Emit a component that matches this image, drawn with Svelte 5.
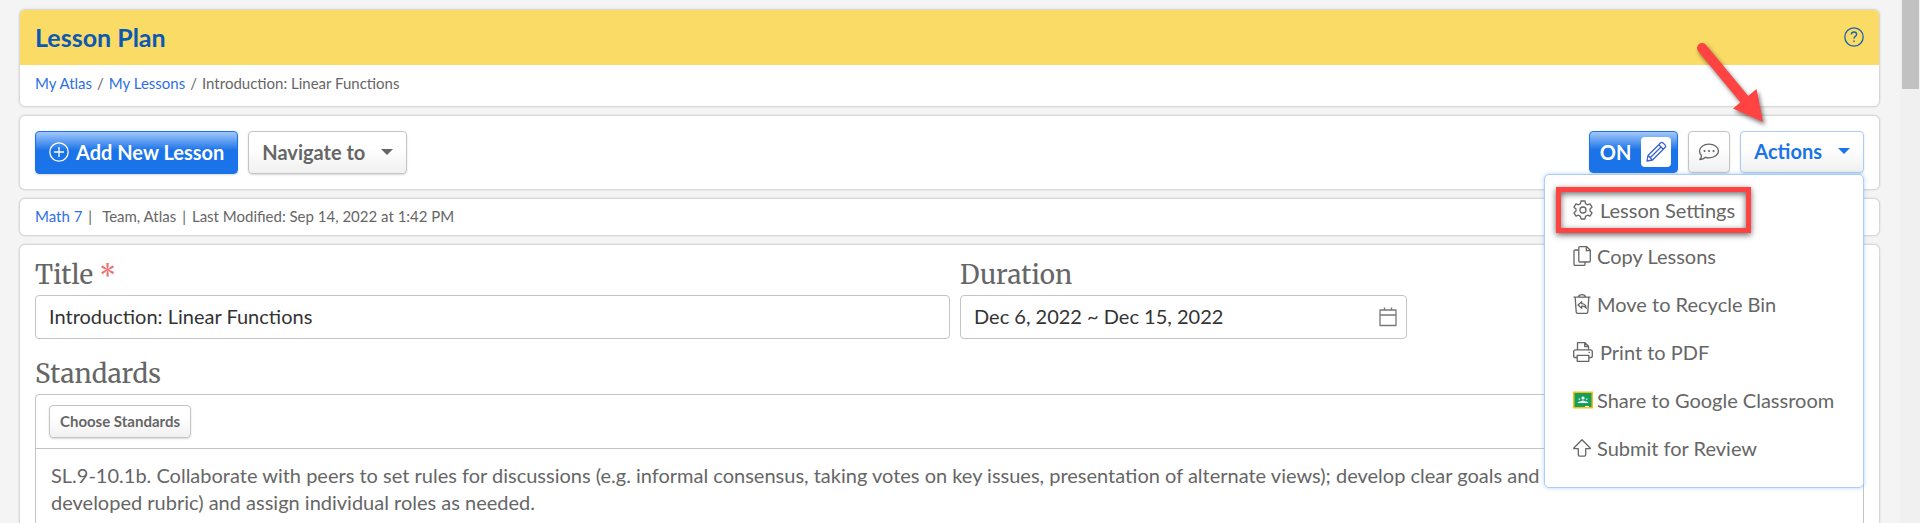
<script>
  let title = $state('Introduction: Linear Functions');
  let duration = $state('Dec 6, 2022 ~ Dec 15, 2022');
  let editing = $state(true);
  let menuOpen = $state(true);

  const menuItems = [
    { icon: 'gear', label: 'Lesson Settings', highlight: true },
    { icon: 'copy', label: 'Copy Lessons' },
    { icon: 'bin', label: 'Move to Recycle Bin' },
    { icon: 'print', label: 'Print to PDF' },
    { icon: 'classroom', label: 'Share to Google Classroom' },
    { icon: 'up', label: 'Submit for Review' },
  ];
</script>

{#snippet icon(name)}
  {#if name === 'gear'}
    <svg class="wide" width="20" height="20" viewBox="0 0 20 20">
      <path d="M8 1h4l.5 2.6 2 1.2 2.5-1 2 3.4-2 1.7v2.2l2 1.7-2 3.4-2.500-1-2 1.200L12 19H8l-.5-2.600-2-1.200-2.500 1-2-3.400 2-1.700V8.900L1 7.200l2-3.400 2.500 1 2-1.200z" />
      <circle cx="10" cy="10" r="3" />
    </svg>
  {:else if name === 'copy'}
    <svg width="18" height="20" viewBox="0 0 18 20">
      <path d="M5.700 4H2.200Q1 4 1 5.200v13.100q0 1.200 1.200 1.200h8.600q1.200 0 1.200-1.200V16" />
      <path d="M7 .7h6.800l3.500 3.500v10.600q0 1.200-1.200 1.200H7q-1.200 0-1.200-1.200V1.900Q5.800.7 7 .7z" />
      <path d="M13.300.9v3.800h3.800" />
    </svg>
  {:else if name === 'bin'}
    <svg width="18" height="20" viewBox="0 0 18 20">
      <path d="M.5 3.200h17M5.500 3Q6 .7 9 .7T12.500 3M2.200 3.500l1 14.500q.1 1.400 1.400 1.400h8.800q1.300 0 1.400-1.400l1-14.500" />
      <path d="M8.700 7.700 5 11l3.700 3.200v-2q3-.5 4.500 2-.3-4.300-4.500-4.500z" />
    </svg>
  {:else if name === 'print'}
    <svg class="wide" width="20" height="20" viewBox="0 0 20 20">
      <path d="M4.500 7.500V.7H12l3.500 3.500v3.300M11.700 1v3.500h3.600M4 15.500H2q-1.300 0-1.300-1.300v-4.400q0-2 2-2h14.600q2 0 2 2v4.400q0 1.300-1.300 1.300h-2" />
      <path d="M4.200 13.300h11.600v6H4.200zM15.500 10.400h1.400" />
    </svg>
  {:else if name === 'classroom'}
    <svg class="logo" width="20" height="18" viewBox="0 0 20 18">
      <path fill="#fbbc14" stroke="none" d="M0 .5h20v17H0z" />
      <path fill="#13a05c" stroke="none" d="M1.500 2h17v14h-17z" />
      <circle cx="10" cy="7" r="1.600" fill="#fff" stroke="none" />
      <circle cx="6.300" cy="8.300" r="1" fill="#9ddcbc" stroke="none" />
      <circle cx="13.700" cy="8.300" r="1" fill="#9ddcbc" stroke="none" />
      <path fill="#fff" stroke="none" d="M4.500 12q.5-2 3-1.500Q10 8.500 12.500 10.500q2.500-.5 3 1.500zM12 15h4v1h-4z" />
    </svg>
  {:else}
    <svg width="18" height="18" viewBox="0 0 18 18">
      <path d="M9 .8 17.200 9q.3.700-.5.700h-4v6.100q0 1.400-1.400 1.400H6.700q-1.400 0-1.400-1.400V9.700h-4Q.5 9.700.8 9z" />
    </svg>
  {/if}
{/snippet}

<div class="page">
  <main>
    <header class="card">
      <div class="banner">
        <h1>Lesson Plan</h1>
        <button class="help" aria-label="Help">
          <svg width="20" height="20" viewBox="0 0 20 20">
            <circle cx="10" cy="10" r="9.200" />
            <path d="M7.300 7.500q.2-2.500 2.700-2.500 2.600 0 2.600 2.300 0 1.300-1.300 2.100-1.300.9-1.300 2.400" />
            <path d="M10 13.600v1.400" />
          </svg>
        </button>
      </div>
      <nav class="breadcrumb">
        <a href="#atlas">My Atlas</a><span>/</span><a href="#lessons">My Lessons</a><span>/</span>Introduction: Linear Functions
      </nav>
    </header>

    <section class="card toolbar">
      <button class="btn primary">
        <svg width="20" height="20" viewBox="0 0 20 20">
          <circle cx="10" cy="10" r="9.200" />
          <path d="M10 5v10M5 10h10" />
        </svg>
        Add New Lesson
      </button>
      <button class="btn">Navigate to <i class="caret"></i></button>

      <div class="right">
        <button class="btn primary toggle" aria-pressed={editing} onclick={() => (editing = !editing)}>
          {editing ? 'ON' : 'OFF'}
          <span class="knob">
            <svg width="22" height="22" viewBox="0 0 22 22">
              <path d="M2 20l1-5.500L15.500 2q1.300-1.300 2.600 0l1.900 1.900q1.300 1.300 0 2.600L7.500 19zM3 14.500 7.500 19M13.800 3.700l4.500 4.500M5.200 16.800 15.800 6.200" />
            </svg>
          </span>
        </button>
        <button class="btn comment" aria-label="Comments">
          <svg width="22" height="20" viewBox="0 0 22 20">
            <path d="M11 2.200c5.400 0 9.500 3 9.500 6.800s-4.100 6.800-9.500 6.800q-2 0-3.700-.5-2 2.300-5.500 2.200 1.700-1.600 1.700-3.900Q1.500 11.700 1.500 9C1.500 5.200 5.600 2.200 11 2.200z" />
            <path class="dots" d="M6.500 9h.1M11 9h.1M15.500 9h.1" />
          </svg>
        </button>
        <div class="dropdown">
          <button class="btn actions" aria-expanded={menuOpen} onclick={() => (menuOpen = !menuOpen)}>
            Actions <i class="caret"></i>
          </button>
          {#if menuOpen}
            <ul class="menu">
              {#each menuItems as item}
                <li class:highlight={item.highlight}>
                  <button>{@render icon(item.icon)}{item.label}</button>
                </li>
              {/each}
            </ul>
          {/if}
          <svg class="pointer" width="76" height="90" viewBox="0 0 76 90" aria-hidden="true">
            <path d="M9 9 52 61" />
            <path class="head" d="M63.500 50 70 83 40 69.500z" />
          </svg>
        </div>
      </div>
    </section>

    <section class="card meta">
      <a href="#math">Math 7</a><span class="bar">|</span>Team, Atlas<span>|</span>Last Modified: Sep 14, 2022 at 1:42 PM
    </section>

    <section class="card form">
      <div class="fields">
        <div class="field">
          <label for="title">Title <span class="required">*</span></label>
          <input id="title" type="text" bind:value={title} />
        </div>
        <div class="field">
          <label for="duration">Duration</label>
          <div class="date">
            <input id="duration" type="text" bind:value={duration} />
            <svg width="18" height="20" viewBox="0 0 18 20">
              <path d="M1 3h16v15.500H1zM1 8h16M5.500.5v3M12.500.5v3" />
            </svg>
          </div>
        </div>
      </div>

      <h2>Standards</h2>
      <div class="standards">
        <div class="choose">
          <button class="btn small">Choose Standards</button>
        </div>
        <p>
          SL.9-10.1b. Collaborate with peers to set rules for discussions (e.g. informal consensus, taking votes on key issues, presentation of alternate views); develop clear goals and assessment criteria (e.g.<br />
          developed rubric) and assign individual roles as needed.
        </p>
      </div>
    </section>
  </main>
  <div class="scrollbar"><div class="thumb"></div></div>
</div>

<style>
  :global(body) {
    background: #f4f4f4;
  }

  .page {
    display: flex;
    height: 100vh;
    overflow: hidden;
    font-family: Lato, Carlito, sans-serif;
    font-size: 20px;
    color: #666;
  }

  main {
    flex: 1;
    min-width: 0;
    display: flex;
    flex-direction: column;
    gap: 8px;
    padding: 9px 20px 0 19px;
  }

  svg {
    fill: none;
    stroke: currentColor;
    stroke-width: 1.3;
    stroke-linejoin: round;
    flex: none;
  }

  a {
    color: #2f6fe4;
    text-decoration: none;
  }

  button,
  input {
    font: inherit;
    color: inherit;
    box-sizing: border-box;
  }

  button {
    display: flex;
    align-items: center;
    cursor: pointer;
  }

  .card {
    background: #fff;
    border: 1px solid #d8d8d8;
    border-radius: 6px;
    box-shadow: 0 0 2px rgba(0, 0, 0, 0.15);
  }

  .banner {
    display: flex;
    align-items: center;
    justify-content: space-between;
    box-sizing: border-box;
    height: 55px;
    padding: 0 15px 2px;
    background: #fadb65;
    border-radius: 5px 5px 0 0;
  }

  h1 {
    margin: 0;
    font-size: 25px;
    font-weight: 700;
    color: #0b58b5;
  }

  .help {
    padding: 0;
    border: 0;
    background: none;
    color: #1f5fae;
  }

  .breadcrumb,
  .meta {
    font-size: 15px;
    line-height: 34px;
    padding: 0 15px 2px;
  }

  .breadcrumb {
    line-height: 36px;
    padding-bottom: 5px;
  }

  .breadcrumb span {
    margin: 0 5px;
  }

  .meta span {
    margin: 0 6px;
  }

  .meta .bar {
    margin-right: 10px;
  }

  .toolbar {
    display: flex;
    gap: 10px;
    padding: 15px;
  }

  .btn {
    height: 43px;
    padding: 0 13px 2px;
    border: 1px solid #c4c4c4;
    border-radius: 4px;
    background: linear-gradient(#fff 40%, #f0f0f0);
    box-shadow: 0 1px 2px rgba(0, 0, 0, 0.15);
    font-weight: 700;
  }

  .primary {
    gap: 7px;
    border-color: #1a73e8;
    background: linear-gradient(#a3c8fb, #1a73e8 45%);
    color: #fff;
  }

  .caret {
    margin-left: 16px;
    border: 6px solid transparent;
    border-top-color: currentColor;
    border-bottom: 0;
  }

  .right {
    display: flex;
    gap: 10px;
    margin-left: auto;
  }

  .right .btn {
    height: 42px;
  }

  .toggle {
    gap: 10px;
    padding: 0 6px 0 10px;
  }

  .knob {
    display: flex;
    align-items: center;
    justify-content: center;
    width: 30px;
    height: 30px;
    border-radius: 4px;
    background: #fff;
    color: #3a62d8;
  }

  .comment {
    padding: 0 9px;
  }

  .dots {
    stroke-width: 2;
    stroke-linecap: round;
  }

  .dropdown {
    position: relative;
  }

  .actions {
    border-color: #a9cdfb;
    color: #1a73e8;
  }

  .menu {
    position: absolute;
    top: 100%;
    right: 0;
    z-index: 1;
    box-sizing: border-box;
    width: 320px;
    margin: 0;
    padding: 12px 11px 14px;
    border: 1px solid #a9cdfb;
    border-radius: 5px;
    background: #fff;
    box-shadow: 0 0 4px rgba(80, 150, 240, 0.4);
    list-style: none;
  }

  .menu button {
    gap: 6px;
    height: 48px;
    padding: 0 17px 2px;
    border: 0;
    background: none;
    white-space: nowrap;
  }

  .menu .wide {
    margin-right: 1px;
  }

  .menu .logo {
    margin-right: -2px;
  }

  .menu .highlight {
    width: fit-content;
  }

  .menu .highlight button {
    height: 46px;
    padding: 0 11px 0 12px;
    border: 5px solid #ff4343;
    box-shadow: 0 2px 6px rgba(0, 0, 0, 0.6), inset 0 2px 6px rgba(0, 0, 0, 0.6);
  }

  .pointer {
    position: absolute;
    right: 95px;
    bottom: 45px;
    z-index: 2;
    stroke: #ff4343;
    stroke-width: 10;
    stroke-linecap: round;
    filter: drop-shadow(2px 3px 2px rgba(0, 0, 0, 0.5));
    overflow: visible;
  }

  .head {
    fill: #ff4343;
    stroke: none;
  }

  .form {
    flex: none;
    padding: 14px 15px;
  }

  .fields {
    display: grid;
    grid-template-columns: 915fr 447fr 447fr;
    gap: 10px;
  }

  label,
  h2 {
    display: block;
    margin: 0;
    font-family: Merriweather, 'DejaVu Serif Condensed', 'DejaVu Serif', serif;
    font-size: 26px;
    font-weight: 400;
    line-height: 32px;
  }

  label {
    margin-bottom: 4px;
  }

  h2 {
    margin: 19px 0 4px;
  }

  .required {
    color: #ee7070;
  }

  input {
    width: 100%;
    height: 44px;
    padding: 0 13px 3px;
    border: 1px solid #c4c4c4;
    border-radius: 4px;
    background: #fff;
    color: #333;
  }

  .date {
    position: relative;
  }

  .date svg {
    position: absolute;
    top: 12px;
    right: 10px;
    color: #777;
  }

  .standards {
    border: 1px solid #c4c4c4;
    border-radius: 4px;
  }

  .choose {
    padding: 10px 13px;
    border-bottom: 1px solid #c4c4c4;
  }

  .small {
    height: 33px;
    padding: 0 10px 2px;
    font-size: 15px;
  }

  p {
    margin: 0;
    padding: 13px 15px 24px;
    line-height: 27px;
    white-space: nowrap;
    overflow: hidden;
  }

  .scrollbar {
    width: 20px;
    background: #f0f0f0;
  }

  .thumb {
    width: 17px;
    height: 89px;
    margin: 0 auto;
    background: #c1c1c1;
  }
</style>
